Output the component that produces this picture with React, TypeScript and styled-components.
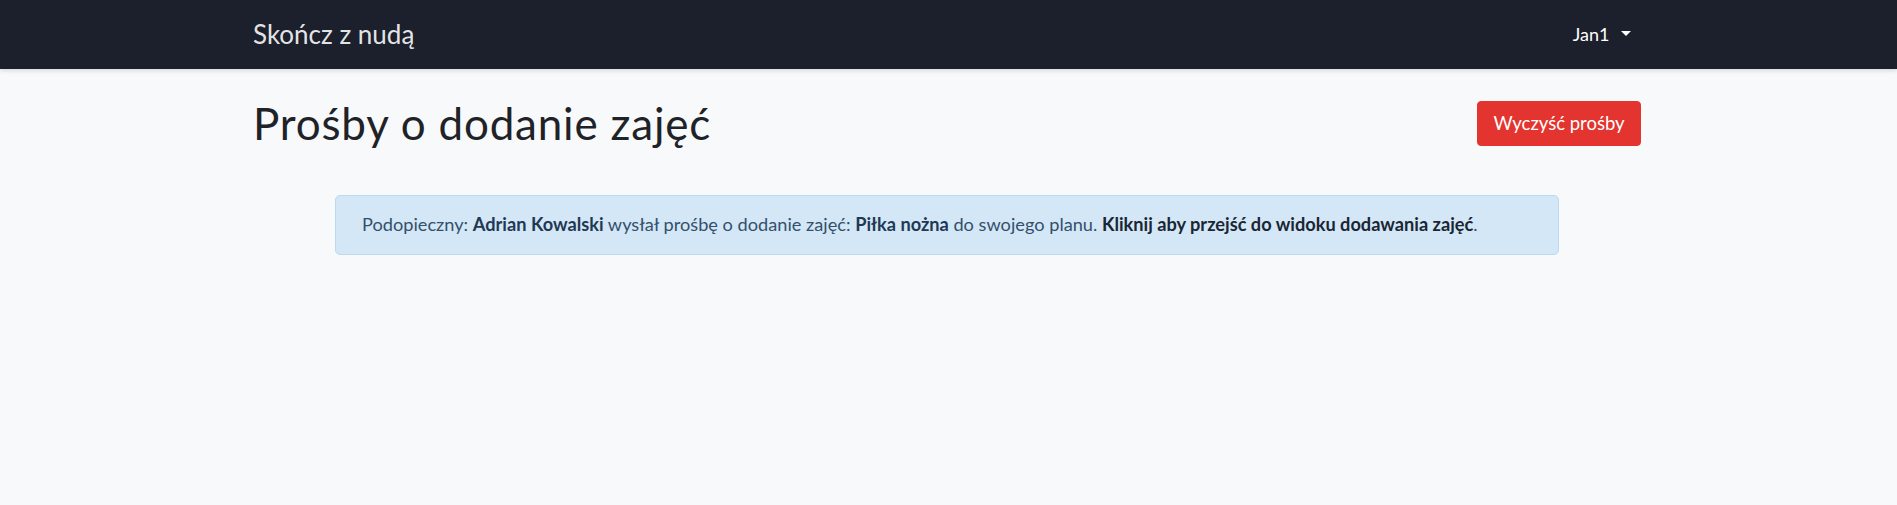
import React from "react";
import styled, { createGlobalStyle } from "styled-components";

const GlobalStyle = createGlobalStyle`
  html, body {
    margin: 0;
    padding: 0;
  }
  body {
    background: #f8f9fb;
    font-family: Lato, "Noto Sans", "Liberation Sans", sans-serif;
    font-size: 18px;
    line-height: 1.5;
    color: #212529;
    min-height: 100vh;
  }
`;

const Navbar = styled.nav`
  height: 69px;
  background: #1b202c;
  box-shadow: 0 2px 4px rgba(0, 0, 0, 0.12);
  display: flex;
  align-items: center;
`;

// content spans 253..1641 in a 1897 wide window
const Container = styled.div`
  box-sizing: border-box;
  width: 100%;
  max-width: 1391px;
  margin: 0 auto;
  padding-right: 3px;
  display: flex;
  align-items: center;
  justify-content: space-between;
`;

const Brand = styled.a`
  color: rgba(255, 255, 255, 0.9);
  font-size: 26px;
  line-height: 1;
  text-decoration: none;
  padding-bottom: 2px;
`;

const UserToggle = styled.button`
  border: none;
  background: transparent;
  color: #fff;
  font-family: inherit;
  font-size: 18px;
  padding: 0 10.5px 2px 9px;
  display: flex;
  align-items: center;
  cursor: pointer;
  &::after {
    content: "";
    display: inline-block;
    margin-left: 11px;
    border-top: 5.4px solid #fff;
    border-left: 5.4px solid transparent;
    border-right: 5.4px solid transparent;
  }
`;

const Main = styled.main`
  box-sizing: border-box;
  max-width: 1391px;
  margin: 0 auto;
  padding: 28px 3px 0 0;
`;

const Header = styled.div`
  display: flex;
  align-items: center;
  justify-content: space-between;
`;

const Title = styled.h1`
  margin: 0;
  font-size: 44px;
  font-weight: 400;
  letter-spacing: 0.8px;
  line-height: 1.2;
  color: #1f2328;
`;

const DangerButton = styled.button`
  height: 45px;
  width: 164px;
  border: 1px solid #e3342f;
  border-radius: 4px;
  background: #e3342f;
  color: #fff;
  font-family: inherit;
  font-size: 18.5px;
  line-height: 1;
  cursor: pointer;
`;

const Alert = styled.div`
  max-width: 1224px;
  box-sizing: border-box;
  margin: 45px auto 0;
  padding: 15px 26px 16px;
  background: #d4e7f7;
  border: 1px solid #bcd9f0;
  border-radius: 5px;
  color: #33506b;
  font-size: 18.2px;
  line-height: 27px;
  b {
    color: #1f3954;
    font-weight: 700;
  }
`;

const AlertLink = styled.a`
  color: #1a2633;
  font-weight: 700;
  text-decoration: none;
  cursor: pointer;
`;

export default function App() {
  return (
    <>
      <GlobalStyle />
      <Navbar>
        <Container>
          <Brand href="#">Skończ z nudą</Brand>
          <UserToggle>Jan1</UserToggle>
        </Container>
      </Navbar>
      <Main>
        <Header>
          <Title>Prośby o dodanie zajęć</Title>
          <DangerButton>Wyczyść prośby</DangerButton>
        </Header>
        <Alert>
          Podopieczny: <b>Adrian Kowalski</b> wysłał prośbę o dodanie zajęć:{" "}
          <b>Piłka nożna</b> do swojego planu.{" "}
          <AlertLink>Kliknij aby przejść do widoku dodawania zajęć</AlertLink>.
        </Alert>
      </Main>
    </>
  );
}
